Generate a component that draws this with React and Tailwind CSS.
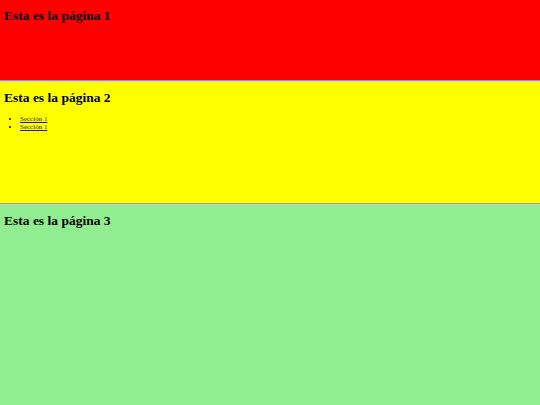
export default function App() {
  const serif = { fontFamily: '"Liberation Serif", "Times New Roman", serif' };
  return (
    <div className="w-[540px] h-[405px] overflow-hidden flex flex-col" style={serif}>
      <section className="h-[80px] bg-[#ff0000] pl-[4px] pt-[8px]">
        <h1 className="text-[13.5px] leading-[16px] font-bold text-black">Esta es la página 1</h1>
      </section>
      <div className="h-[1px] bg-[#9c9c9c]" />
      <div className="h-[1px] bg-[#cfcfcf]" />
      <section className="h-[121px] bg-[#ffff00] pl-[4px] pt-[8px]">
        <h1 className="text-[13.5px] leading-[16px] font-bold text-black">Esta es la página 2</h1>
        <ul className="mt-[9px] pl-[16px] list-disc text-[7px] leading-[8px] text-black">
          <li><a href="#s1" className="underline text-[#222]">Sección 1</a></li>
          <li><a href="#s1" className="underline text-[#222]">Sección 1</a></li>
        </ul>
      </section>
      <div className="h-[1px] bg-[#9c9c9c]" />
      <div className="h-[1px] bg-[#cfcfcf]" />
      <section className="flex-1 bg-[#90ee90] pl-[4px] pt-[8px]">
        <h1 className="text-[13.5px] leading-[16px] font-bold text-black">Esta es la página 3</h1>
      </section>
    </div>
  );
}
